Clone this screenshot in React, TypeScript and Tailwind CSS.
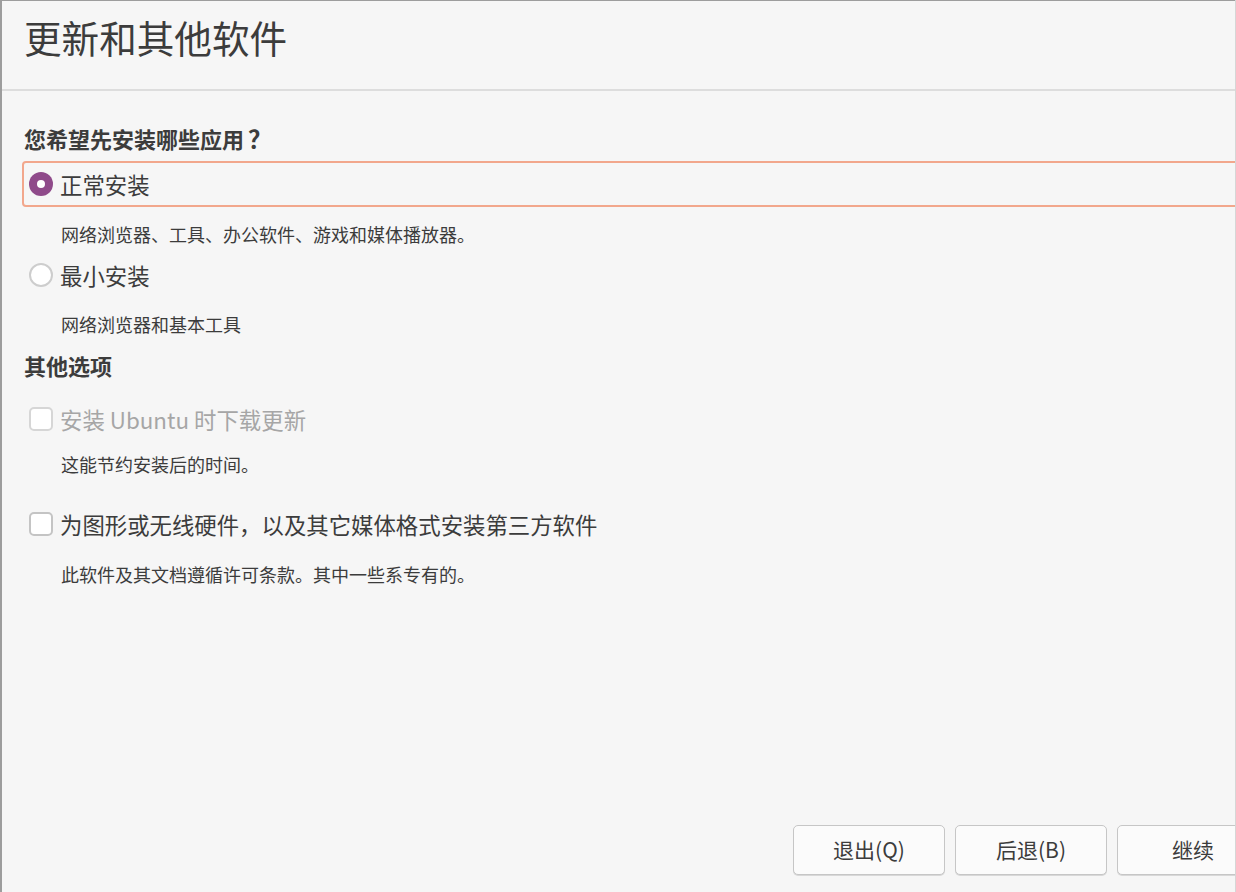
import React from "react";

const font = { fontFamily: '"Noto Sans CJK SC", "Noto Sans", sans-serif' };

function Radio({ checked }: { checked?: boolean }) {
  return checked ? (
    <span className="flex h-[24px] w-[24px] shrink-0 items-center justify-center rounded-full bg-[#8f4a8a]">
      <span className="h-[8px] w-[8px] rounded-full bg-white" />
    </span>
  ) : (
    <span className="h-[24px] w-[24px] shrink-0 rounded-full border-2 border-[#cdcdcd] bg-white" />
  );
}

function Check({ disabled }: { disabled?: boolean }) {
  return (
    <span
      className={
        "h-[24px] w-[24px] shrink-0 rounded-[5px] border-2 bg-white " +
        (disabled ? "border-[#d6d6d6]" : "border-[#c4c4c4]")
      }
    />
  );
}

function Row({
  focused,
  control,
  label,
  muted,
}: {
  focused?: boolean;
  control: React.ReactNode;
  label: string;
  muted?: boolean;
}) {
  return (
    <div
      className={
        "flex h-[46px] items-center gap-[7px] rounded-[4px] border-2 pl-[5px] " +
        (focused ? "border-[#f2a78c]" : "border-transparent")
      }
    >
      {control}
      <span
        className={
          "text-[22.4px] leading-[30px] " + (muted ? "text-[#a6a6a6]" : "text-[#3c3c3c]")
        }
      >
        {label}
      </span>
    </div>
  );
}

function Desc({ children, mt }: { children: string; mt: string }) {
  return (
    <div className={"pl-[39px] text-[18px] leading-[26px] text-[#3c3c3c] " + mt}>
      {children}
    </div>
  );
}

export default function App() {
  return (
    <div
      className="relative h-[892px] w-[1236px] overflow-hidden bg-[#f6f6f6]"
      style={font}
      lang="zh-CN"
    >
      <div className="flex h-[892px] w-[1300px] flex-col border-l-2 border-t border-[#9d9d9d] bg-[#f6f6f6]">
        <div className="h-[90px] border-b-2 border-[#dddddd] pl-[22px] pt-[14px]">
          <h1 className="text-[37.6px] font-normal leading-[44px] text-[#3c3c3c]">
            更新和其他软件
          </h1>
        </div>

        <div className="flex flex-col pl-[20px]">
          <div className="mt-[32px] flex items-center pl-[2px] text-[22px] font-bold leading-[30px] text-[#3c3c3c]">
            <span>您希望先安装哪些应用</span>
            <span className="inline-block w-[22px] pl-[4px] text-[24px]">？</span>
          </div>
          <div className="mt-[8px]">
            <Row focused control={<Radio checked />} label="正常安装" />
          </div>
          <Desc mt="mt-[14px]">网络浏览器、工具、办公软件、游戏和媒体播放器。</Desc>
          <div className="mt-[5px]">
            <Row control={<Radio />} label="最小安装" />
          </div>
          <Desc mt="mt-[13px]">网络浏览器和基本工具</Desc>

          <div className="mt-[13px] pl-[2px] text-[22px] font-bold leading-[30px] text-[#3c3c3c]">
            其他选项
          </div>
          <div className="mt-[16px]">
            <Row control={<Check disabled />} label="安装 Ubuntu 时下载更新" muted />
          </div>
          <Desc mt="mt-[9px]">这能节约安装后的时间。</Desc>
          <div className="mt-[24px]">
            <Row control={<Check />} label="为图形或无线硬件，以及其它媒体格式安装第三方软件" />
          </div>
          <Desc mt="mt-[14px]">此软件及其文档遵循许可条款。其中一些系专有的。</Desc>
        </div>

        <div className="mt-auto flex justify-end gap-[10px] pb-[17px] pr-[31px]">
          {["退出(Q)", "后退(B)", "继续"].map((t) => (
            <button
              key={t}
              className="h-[50px] w-[152px] rounded-[5px] border border-[#c6c6c6] bg-[#fbfbfb] text-[21px] text-[#3c3c3c] shadow-[0_1px_0_#d8d8d8]"
            >
              {t}
            </button>
          ))}
        </div>
      </div>
      <div className="absolute right-0 top-0 h-full w-px bg-[#d6d6d6]" />
    </div>
  );
}
